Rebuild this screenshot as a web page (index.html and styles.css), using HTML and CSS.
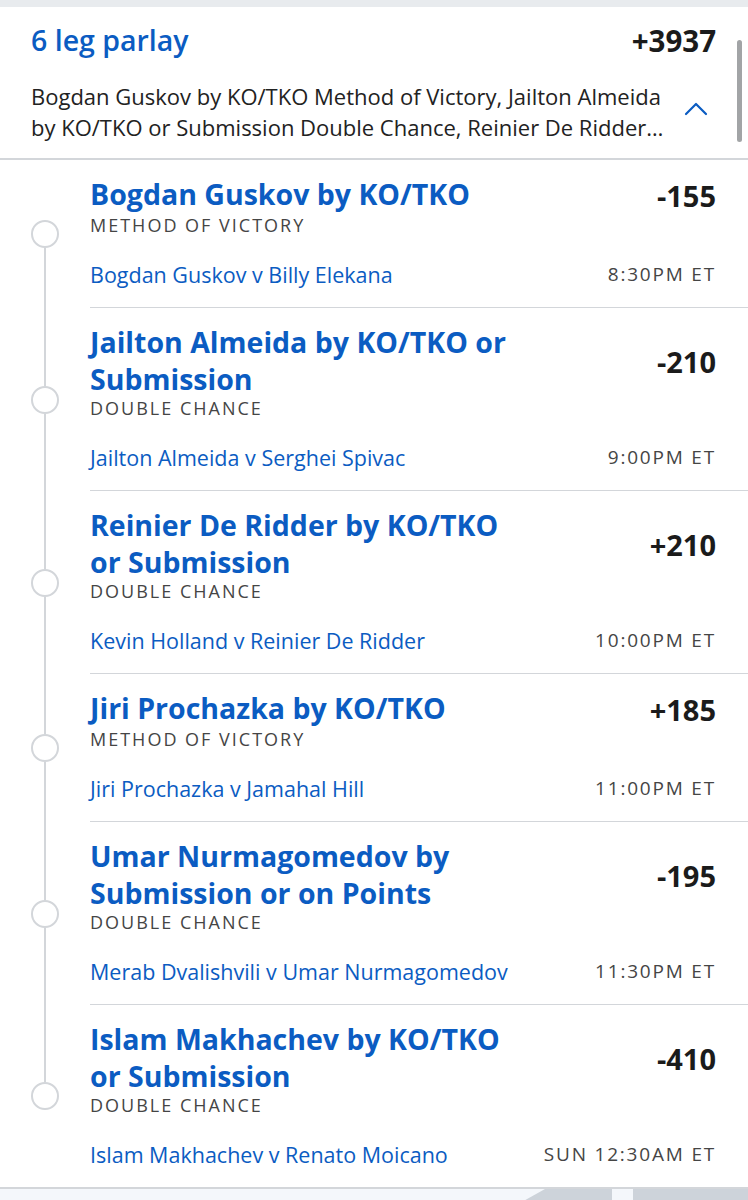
FILE: index.html
```html
<!DOCTYPE html>
<html>
<head>
<meta charset="utf-8">
<link rel="stylesheet" href="styles.css">
</head>
<body>
<div class="topbar"></div>
<header class="header">
  <div class="header-row">
    <h1 class="parlay-title">6 leg parlay</h1>
    <div class="parlay-odds">+3937</div>
  </div>
  <div class="desc-row">
    <p class="desc">Bogdan Guskov by KO/TKO Method of Victory, Jailton Almeida by KO/TKO or Submission Double Chance, Reinier De Ridder by KO/TKO or Submission Double Chance, Jiri Prochazka by KO/TKO Method of Victory, Umar Nurmagomedov by Submission or on Points Double Chance, Islam Makhachev by KO/TKO or Submission Double Chance</p>
    <svg class="chevron" width="24" height="14" viewBox="0 0 24 14"><path d="M2 12 L12 2 L22 12" fill="none" stroke="#0b5cc2" stroke-width="2.2" stroke-linecap="round" stroke-linejoin="round"/></svg>
  </div>
  <div class="scrollbar"></div>
</header>

<main class="legs">
  <section class="leg first">
    <div class="rail"><span class="seg"></span><span class="dot"></span><span class="seg"></span></div>
    <div class="leg-body">
      <h2 class="leg-title">Bogdan Guskov by KO/TKO</h2>
      <div class="leg-odds">-155</div>
      <div class="leg-market">METHOD OF VICTORY</div>
      <div class="leg-event">Bogdan Guskov v Billy Elekana</div>
      <div class="leg-time">8:30PM ET</div>
    </div>
  </section>
  <section class="leg">
    <div class="rail"><span class="seg"></span><span class="dot"></span><span class="seg"></span></div>
    <div class="leg-body">
      <h2 class="leg-title">Jailton Almeida by KO/TKO or Submission</h2>
      <div class="leg-odds">-210</div>
      <div class="leg-market">DOUBLE CHANCE</div>
      <div class="leg-event">Jailton Almeida v Serghei Spivac</div>
      <div class="leg-time">9:00PM ET</div>
    </div>
  </section>
  <section class="leg">
    <div class="rail"><span class="seg"></span><span class="dot"></span><span class="seg"></span></div>
    <div class="leg-body">
      <h2 class="leg-title">Reinier De Ridder by KO/TKO or Submission</h2>
      <div class="leg-odds">+210</div>
      <div class="leg-market">DOUBLE CHANCE</div>
      <div class="leg-event">Kevin Holland v Reinier De Ridder</div>
      <div class="leg-time">10:00PM ET</div>
    </div>
  </section>
  <section class="leg">
    <div class="rail"><span class="seg"></span><span class="dot"></span><span class="seg"></span></div>
    <div class="leg-body">
      <h2 class="leg-title">Jiri Prochazka by KO/TKO</h2>
      <div class="leg-odds">+185</div>
      <div class="leg-market">METHOD OF VICTORY</div>
      <div class="leg-event">Jiri Prochazka v Jamahal Hill</div>
      <div class="leg-time">11:00PM ET</div>
    </div>
  </section>
  <section class="leg">
    <div class="rail"><span class="seg"></span><span class="dot"></span><span class="seg"></span></div>
    <div class="leg-body">
      <h2 class="leg-title">Umar Nurmagomedov by Submission or on Points</h2>
      <div class="leg-odds">-195</div>
      <div class="leg-market">DOUBLE CHANCE</div>
      <div class="leg-event">Merab Dvalishvili v Umar Nurmagomedov</div>
      <div class="leg-time">11:30PM ET</div>
    </div>
  </section>
  <section class="leg last">
    <div class="rail"><span class="seg"></span><span class="dot"></span><span class="seg"></span></div>
    <div class="leg-body">
      <h2 class="leg-title">Islam Makhachev by KO/TKO or Submission</h2>
      <div class="leg-odds">-410</div>
      <div class="leg-market">DOUBLE CHANCE</div>
      <div class="leg-event">Islam Makhachev v Renato Moicano</div>
      <div class="leg-time">SUN 12:30AM ET</div>
    </div>
  </section>
</main>

<footer class="footer">
  <svg class="footer-art" width="748" height="14" viewBox="0 0 748 14" preserveAspectRatio="none">
    <polygon points="545,0 612,0 612,14 520,14" fill="#cdd3da"/>
    <rect x="633" y="0" width="115" height="14" fill="#cdd3da"/>
  </svg>
</footer>
</body>
</html>
```
FILE: styles.css
```css
* { box-sizing: border-box; }
html, body { margin: 0; padding: 0; }
body {
  width: 748px;
  height: 1200px;
  overflow: hidden;
  background: #ffffff;
  font-family: "Open Sans", "Liberation Sans", sans-serif;
  color: #222;
}
.topbar {
  height: 7px;
  background: #e8ebee;
}
.header {
  position: relative;
  padding: 15px 32px 15px 31px;
  border-bottom: 2px solid #d3d6da;
}
.header-row {
  display: flex;
  justify-content: space-between;
  align-items: center;
  height: 37px;
}
.parlay-title {
  margin: 0;
  font-size: 28.5px;
  font-weight: 600;
  color: #0b5cc2;
  line-height: 37px;
}
.parlay-odds {
  font-size: 29.5px;
  font-weight: 700;
  color: #1b1b1b;
  line-height: 37px;
}
.desc-row {
  display: flex;
  align-items: center;
  justify-content: space-between;
  margin-top: 22px;
}
.desc {
  margin: 0;
  width: 636px;
  font-size: 22px;
  line-height: 31px;
  color: #222;
  display: -webkit-box;
  -webkit-line-clamp: 2;
  -webkit-box-orient: vertical;
  overflow: hidden;
}
.chevron {
  margin-right: 8px;
  margin-top: -6px;
}
.scrollbar {
  position: absolute;
  right: 6px;
  top: 33px;
  width: 5px;
  height: 102px;
  border-radius: 3px;
  background: #a2a4a6;
}
.legs {
  display: flex;
  flex-direction: column;
}
.leg {
  display: grid;
  grid-template-columns: 90px 1fr;
}
.rail {
  display: flex;
  flex-direction: column;
  align-items: center;
  width: 90px;
}
.rail .seg {
  flex: 1;
  width: 2px;
  background: #d3d6da;
}
.leg.first .rail .seg:first-child,
.leg.last .rail .seg:last-child {
  background: transparent;
}
.rail .dot {
  width: 28px;
  height: 28px;
  border-radius: 50%;
  border: 2px solid #d3d6da;
  background: #fff;
  flex: none;
}
.leg-body {
  display: grid;
  grid-template-columns: 1fr auto;
  padding: 16px 32px 18px 0;
  border-bottom: 1.5px solid #d3d6da;
}
.leg.last .leg-body {
  border-bottom: none;
}
.leg-title {
  grid-column: 1;
  grid-row: 1;
  margin: 0;
  max-width: 420px;
  font-size: 28.5px;
  font-weight: 700;
  line-height: 37px;
  color: #0b5cc2;
}
.leg-odds {
  grid-column: 2;
  grid-row: 1;
  align-self: center;
  justify-self: end;
  font-size: 29px;
  font-weight: 700;
  color: #1b1b1b;
}
.leg-market {
  grid-column: 1 / 3;
  grid-row: 2;
  font-size: 18px;
  line-height: 20px;
  letter-spacing: 2px;
  color: #454545;
}
.leg-event {
  grid-column: 1;
  grid-row: 3;
  margin-top: 26px;
  font-size: 21.5px;
  line-height: 28px;
  color: #0b5cc2;
}
.leg-time {
  grid-column: 2;
  grid-row: 3;
  margin-top: 26px;
  align-self: baseline;
  justify-self: end;
  font-size: 19px;
  line-height: 26px;
  letter-spacing: 1.8px;
  color: #454545;
  text-align: right;
}
.footer {
  border-top: 2px solid #d3d6da;
  height: 16px;
  background: #f4f7fb;
}
.footer-art {
  display: block;
}
```
